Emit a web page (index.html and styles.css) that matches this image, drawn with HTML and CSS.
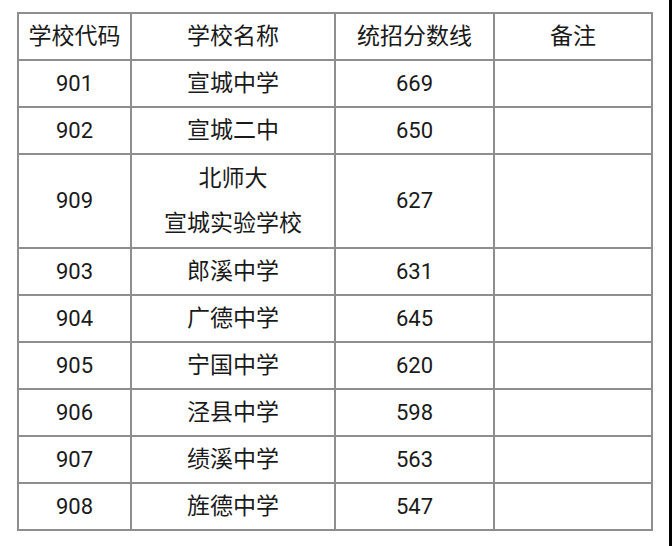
FILE: index.html
```html
<!DOCTYPE html>
<html lang="zh-CN">
<head>
<meta charset="utf-8">
<link rel="stylesheet" href="styles.css">
</head>
<body>
<div class="page">
  <table class="scores">
    <colgroup>
      <col class="c1"><col class="c2"><col class="c3"><col class="c4">
    </colgroup>
    <tr><td>学校代码</td><td>学校名称</td><td>统招分数线</td><td>备注</td></tr>
    <tr><td class="num">901</td><td>宣城中学</td><td class="num">669</td><td></td></tr>
    <tr><td class="num">902</td><td>宣城二中</td><td class="num">650</td><td></td></tr>
    <tr class="tall"><td class="num">909</td><td><div class="ln">北师大</div><div class="ln">宣城实验学校</div></td><td class="num">627</td><td></td></tr>
    <tr><td class="num">903</td><td>郎溪中学</td><td class="num">631</td><td></td></tr>
    <tr><td class="num">904</td><td>广德中学</td><td class="num">645</td><td></td></tr>
    <tr><td class="num">905</td><td>宁国中学</td><td class="num">620</td><td></td></tr>
    <tr><td class="num">906</td><td>泾县中学</td><td class="num">598</td><td></td></tr>
    <tr><td class="num">907</td><td>绩溪中学</td><td class="num">563</td><td></td></tr>
    <tr><td class="num">908</td><td>旌德中学</td><td class="num">547</td><td></td></tr>
  </table>
</div>
</body>
</html>
```
FILE: styles.css
```css
html, body {
  margin: 0;
  padding: 0;
  background: #fff;
}
.page {
  width: 672px;
  height: 546px;
  box-sizing: border-box;
  border-right: 3px solid #000;
  padding: 12px 0 0 17px;
  font-family: Roboto, "Noto Sans CJK SC", "Noto Sans", sans-serif;
  color: #1a1a1a;
}
.scores {
  border-collapse: collapse;
  table-layout: fixed;
  width: 634px;
}
.c1 { width: 113px; }
.c2 { width: 204px; }
.c3 { width: 159px; }
.c4 { width: 158px; }
.scores td {
  border: 2px solid #8e8e8e;
  height: 45px;
  padding: 0;
  text-align: center;
  vertical-align: middle;
  font-size: 23px;
  line-height: 30px;
}
.scores td.num {
  font-size: 22px;
}
.scores tr.tall td {
  height: 92px;
}
.ln {
  line-height: 45px;
}
```
